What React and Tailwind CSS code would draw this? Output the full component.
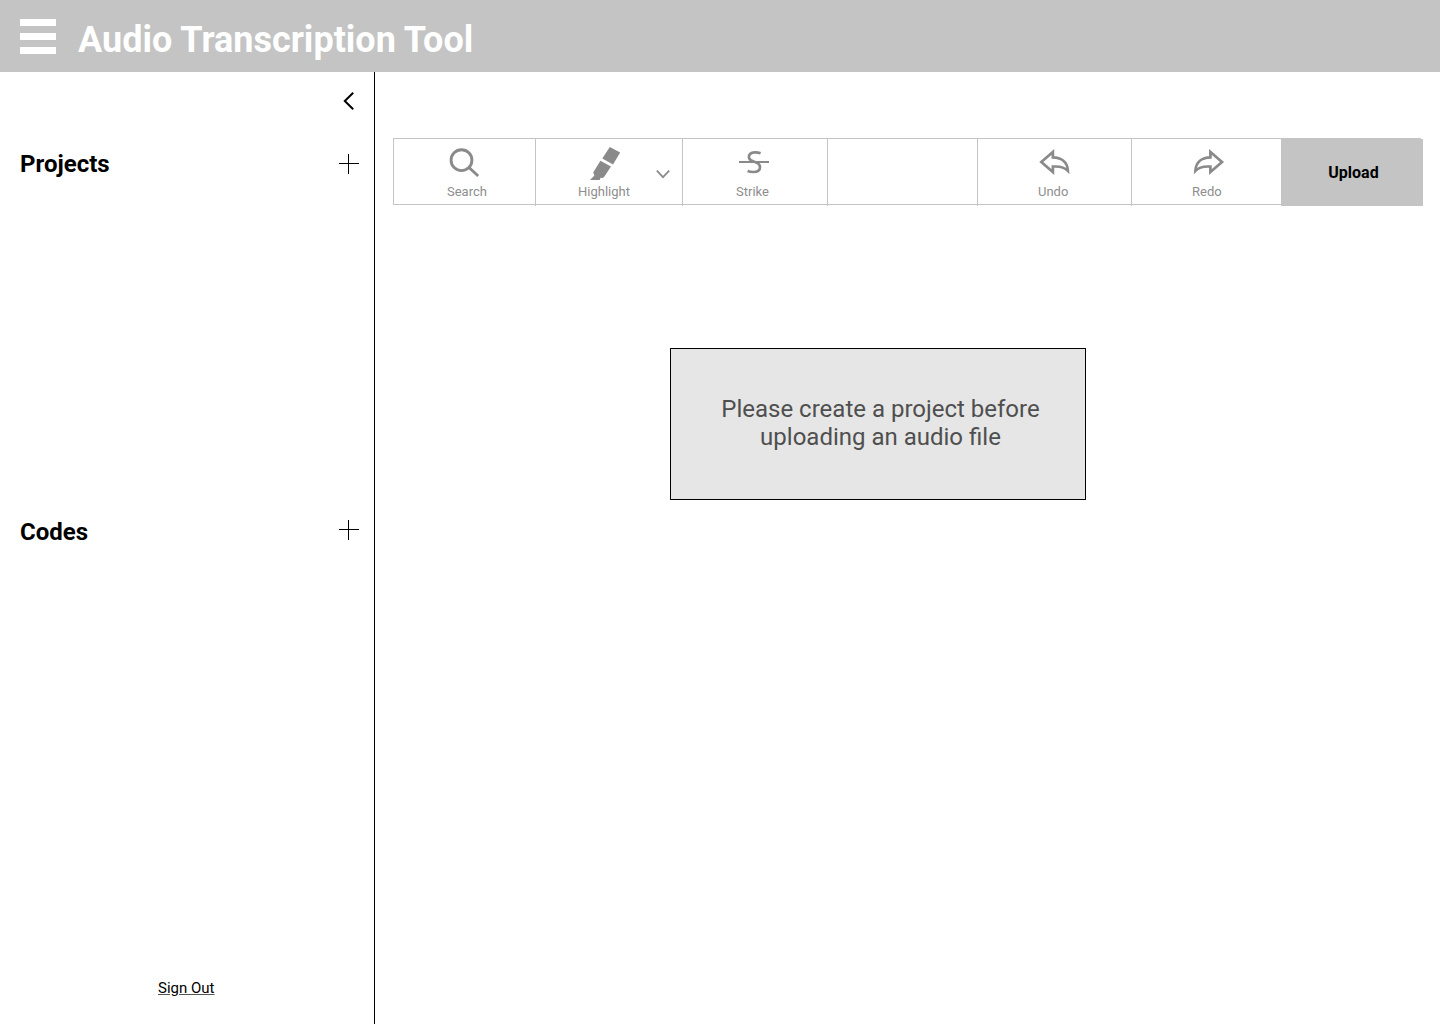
const SearchIcon = () => (
  <svg className="ml-[54px] block" width="34" height="34" viewBox="448 147 34 34" fill="none" stroke="#8a8a8a" strokeWidth="2.9">
    <circle cx="461.5" cy="160.2" r="10.4" />
    <path d="M468.7 167.3 478.2 176" />
  </svg>
);

const HighlightIcon = () => (
  <svg className="ml-[52px] block" width="34" height="34" viewBox="588 147 34 34" fill="#8a8a8a">
    <path d="M609.8 147 620.2 152.4 613 164.4 602.3 158.6Z" />
    <path d="M600.4 160.7 611 166.4 604.4 176.6 602.8 178 600.6 177.8 599.7 180.1 590 180.1 594.4 175.6 593.2 172.6Z" />
  </svg>
);

const StrikeIcon = () => (
  <svg className="ml-[54px] block" width="34" height="34" viewBox="737 147 34 34" fill="none" stroke="#8a8a8a">
    <path d="M739 162H769" strokeWidth="2" />
    <path d="M760.6 153.3C758.6 152.5 756.6 152.2 754.8 152.3C751.2 152.5 748.9 154.4 748.9 157.1C748.9 159.7 751 160.9 754.8 162C758.4 163.1 760 164.7 760 167.2C760 170.4 757.4 172 753.4 172C751.2 172 749.4 171.7 747.6 171" strokeWidth="2.7" />
  </svg>
);

const arrow =
  "M1041.3 162 1052.9 152V157.4C1061.2 157.6 1067.5 162 1067.9 170.8C1064.2 166.9 1058.4 166.2 1052.9 166.6V172Z";

const UndoIcon = () => (
  <svg className="ml-[59px] block" width="34" height="34" viewBox="1037 147 34 34" fill="none" stroke="#8a8a8a" strokeWidth="2.7">
    <path d={arrow} />
  </svg>
);

const RedoIcon = () => (
  <svg className="ml-[60px] block -scale-x-100" width="34" height="34" viewBox="1037.3 147 34 34" fill="none" stroke="#8a8a8a" strokeWidth="2.7">
    <path d={arrow} />
  </svg>
);

const Plus = ({ className }) => (
  <svg className={className} width="20" height="20" viewBox="0 0 20 20" fill="#000" shapeRendering="crispEdges">
    <path d="M9 0h1v20H9zM0 9h20v1H0z" />
  </svg>
);

const Tool = ({ className, labelClass, label, icon, children }) => (
  <button className={`relative flex h-[67px] shrink-0 flex-col items-start border-r border-[#c4c4c4] pt-2 text-left ${className}`}>
    {icon}
    {label && (
      <span className={`mt-[3px] block text-[13px] leading-[15px] text-[#8e8e8e] ${labelClass}`}>{label}</span>
    )}
    {children}
  </button>
);

export default function App() {
  return (
    <div className="flex h-[1024px] w-[1440px] flex-col bg-white font-['Roboto',sans-serif] text-black">
      <header className="flex h-18 shrink-0 items-start bg-[#c4c4c4] pl-5">
        <div className="mt-[19px] flex w-9 flex-col gap-[7px]">
          <span className="h-[7px] bg-white" />
          <span className="h-[7px] bg-white" />
          <span className="h-[7px] bg-white" />
        </div>
        <h1 className="mt-[19px] ml-[22px] text-[36px] leading-[42px] font-bold text-white">Audio Transcription Tool</h1>
      </header>
      <div className="flex min-h-0 flex-1">
        <aside className="flex w-[375px] shrink-0 flex-col border-r border-black">
          <svg className="mt-[19px] ml-[338px] block" width="20" height="20" viewBox="0 0 20 20" fill="none" stroke="#000" strokeWidth="2">
            <path d="M15.2 1.8 6.8 10 15.2 18.2" />
          </svg>
          <section className="mt-[39px] flex h-[368px] items-start pl-5">
            <h2 className="w-[319px] text-2xl leading-7 font-bold">Projects</h2>
            <Plus className="mt-1" />
          </section>
          <section className="flex items-start pl-5">
            <h2 className="w-[319px] text-2xl leading-7 font-bold">Codes</h2>
            <Plus className="mt-[2px]" />
          </section>
          <a href="#" className="mt-auto mb-[27px] ml-[158px] text-[15px] leading-[18px] underline decoration-[#555]">Sign Out</a>
        </aside>
        <main className="flex-1 pt-[66px] pl-[18px]">
          <nav className="flex h-[67px] w-[1028px] border border-r-0 border-[#c4c4c4]">
            <Tool className="w-[142px]" icon={<SearchIcon />} label="Search" labelClass="ml-[53px]" />
            <Tool className="w-[147px]" icon={<HighlightIcon />} label="Highlight" labelClass="ml-[42px]">
              <svg className="absolute top-[29px] left-[119px]" width="16" height="12" viewBox="655 168 16 12" fill="none" stroke="#8a8a8a" strokeWidth="1.7">
                <path d="M656.8 170.6 663 177.2 669.2 170.6" />
              </svg>
            </Tool>
            <Tool className="w-[145px]" icon={<StrikeIcon />} label="Strike" labelClass="ml-[53px]" />
            <Tool className="w-[150px]" />
            <Tool className="w-[154px]" icon={<UndoIcon />} label="Undo" labelClass="ml-[60px]" />
            <Tool className="w-[150px]" icon={<RedoIcon />} label="Redo" labelClass="ml-[60px]" />
            <button className="h-[67px] w-[141px] shrink-0 bg-[#c4c4c4] pl-[2px] text-base font-bold">Upload</button>
          </nav>
          <div className="mt-[143px] ml-[277px] h-[152px] w-[416px] border border-black bg-[#e6e6e6] pt-[46px] pl-[5px] text-center text-2xl leading-7 text-[#4f4f4f]">
            Please create a project before
            <br />
            uploading an audio file
          </div>
        </main>
      </div>
    </div>
  );
}
